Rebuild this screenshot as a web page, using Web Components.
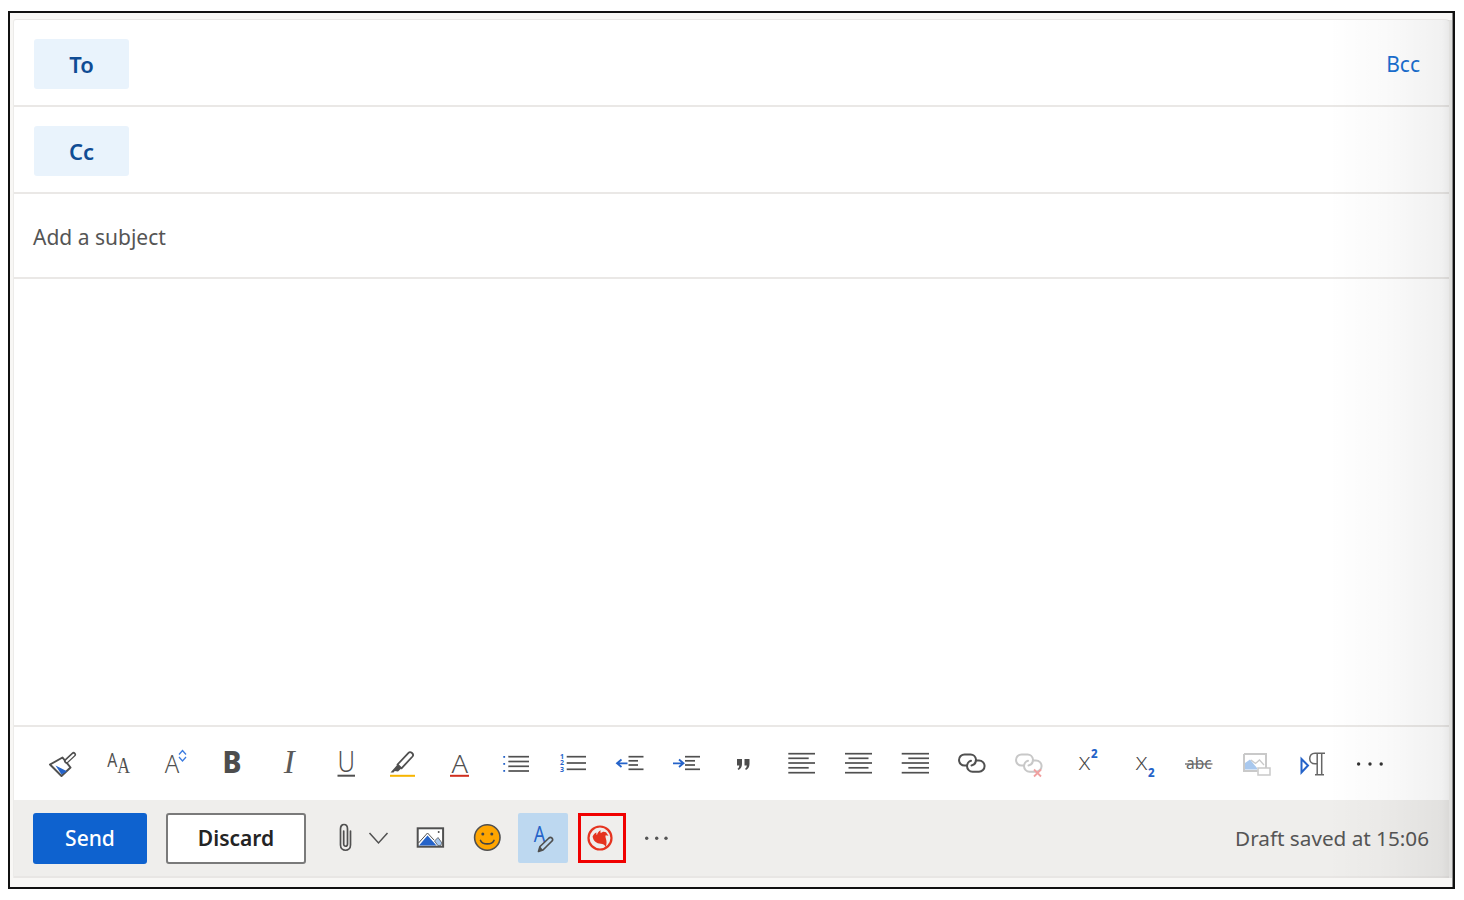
<!DOCTYPE html>
<html lang="en"><head><meta charset="utf-8"><title>Compose</title>
<style>html,body{margin:0;padding:0;background:#fff}body{font-family:"Noto Sans","Open Sans",sans-serif}</style>
</head><body>
<compose-window>
  <recipient-row label="To"><span slot="end">Bcc</span></recipient-row>
  <recipient-row label="Cc"></recipient-row>
  <subject-row>Add a subject</subject-row>
  <editor-body></editor-body>
  <format-toolbar></format-toolbar>
  <action-bar>
    <app-button kind="primary">Send</app-button>
    <app-button kind="secondary" style="margin-left:19px">Discard</app-button>
    <tool-icon name="clip" style="margin-left:23px"></tool-icon>
    <tool-icon name="chev" style="margin-left:1px"></tool-icon>
    <tool-icon name="image" style="margin-left:20px"></tool-icon>
    <tool-icon name="emoji" style="margin-left:25px"></tool-icon>
    <tool-icon name="sign" variant="active" style="margin-left:15px"></tool-icon>
    <tool-icon name="addin" variant="outlined" style="margin-left:10px"></tool-icon>
    <tool-icon name="dots2" style="margin-left:14px"></tool-icon>
    <span slot="status">Draft saved at 15:06</span>
  </action-bar>
</compose-window>
<script>
const G='#505050',B='#2563c9',SANS='\'Noto Sans\',sans-serif',SERIF='\'Liberation Serif\',serif';
const line=(y,a,b,c=G,w=1.7)=>`<path d="M${a} ${y}H${b}" stroke="${c}" stroke-width="${w}"/>`;
const t=(s,x,y,size,o={})=>`<text x="${x}" y="${y}" font-size="${size}" font-family="${o.f||SANS}" font-weight="${o.w||400}" font-style="${o.i?'italic':'normal'}" fill="${o.c||G}" text-anchor="${o.a||'middle'}" ${o.l?`textLength="${o.l}" lengthAdjust="spacingAndGlyphs"`:''}>${s}</text>`;
const chain=c=>`<g fill="none" stroke="${c}" stroke-width="2" stroke-linecap="round"><path d="M11.500 18.600H9.600A5.600 5.600 0 0 1 9.600 7.400H15.600A5.600 5.600 0 0 1 21 12.500C21 15.600 19 18 16.500 18.400"/><path d="M21.500 13.500H24A5.600 5.600 0 0 1 24 24.700H17.700A5.600 5.600 0 0 1 12 19.100C12 16.500 14 14.300 16 13.800"/></g>`;
const ICONS={
 brush:`<path d="M3 17.500 15.500 10.500 23.500 20.500 14.500 29Z" fill="#fff" stroke="${G}" stroke-width="2" stroke-linejoin="round"/><path d="M8.500 18.600 20 24.200 14.500 27.500Z" fill="${B}"/><path d="M19.500 14 26.500 7.500" stroke="${G}" stroke-width="5" stroke-linecap="round"/><path d="M19.800 14 26.500 7.700" stroke="#fff" stroke-width="2" stroke-linecap="round"/>`,
 aa:t('A',9.300,20,20,{l:10})+t('A',20.600,26,23,{f:SERIF,l:12.800}),
 grow:t('A',13,26,26,{w:300,l:14.500})+`<path d="M20 7.500 23.500 3.500 27 7.500M20 10 23.500 14 27 10" fill="none" stroke="#3b7be0" stroke-width="1.300"/>`,
 bold:t('B',16,26,30,{w:800,c:'#4d4d4d',l:19}),
 italic:t('I',16.200,26,33,{f:SERIF,i:1,c:'#5a5a5a'}),
 under:t('U',16.300,25,29,{w:300,l:17.500})+`<rect x="7.500" y="27.700" width="17.500" height="2" fill="${G}"/>`,
 pen:`<path d="M10.500 17.500 21.500 5.800C23.500 3.800 27.500 7.200 25.500 9.500L14.500 21.300Z" fill="#fff" stroke="${G}" stroke-width="1.800" stroke-linejoin="round"/><path d="M3.500 25.500 7.500 21 10.500 17.500 14.500 21.300 11 24.500 7.800 24 6.500 25.500Z" fill="${G}"/><rect x="3" y="27.800" width="25" height="2" fill="#f7b500"/>`,
 acolor:t('A',16.800,26,26,{w:300,l:16.500})+`<rect x="7" y="27.800" width="19" height="2" fill="#d02e1e"/>`,
 bullets:line(9.700,8.300,29)+line(14.500,8.300,29)+line(19.300,8.300,29)+line(24,8.300,29)+`<g fill="${B}"><rect x="3.300" y="9" width="1.800" height="1.800"/><rect x="3.300" y="16" width="1.800" height="1.800"/><rect x="3.300" y="23" width="1.800" height="1.800"/></g>`,
 numbers:line(9.700,9.700,29)+line(16,9.700,29)+line(22.300,9.700,29)+t('1',5,11.500,7,{c:B,w:700})+t('2',5,18,7,{c:B,w:700})+t('3',5,25,7,{c:B,w:700}),
 outdent:line(9.700,14.500,29.500)+line(13.800,14.500,24)+line(18,14.500,24)+line(22.300,14.500,29.500)+`<path d="M13.500 16.300H3.500M7.500 12.500 3 16.300 7.500 20" fill="none" stroke="${B}" stroke-width="1.800"/>`,
 indent:line(9.700,15,30)+line(13.800,15,25)+line(18,15,25)+line(22.300,15,30)+`<path d="M3 16.300H13M9 12.500 13.500 16.300 9 20" fill="none" stroke="${B}" stroke-width="1.800"/>`,
 quote:`<path d="M10 12H15V17C15 20 13.500 22 11.500 23L10.500 21.800C11.700 21 12.200 20 12.300 18.500H10ZM17.500 12H22.500V17C22.500 20 21 22 19 23L18 21.800C19.200 21 19.700 20 19.800 18.500H17.500Z" fill="#4d4d4d"/>`,
 aleft:line(6.700,3.300,30)+line(11.300,3.300,23.700)+line(16,3.300,30)+line(20.800,3.300,23.700)+line(25.700,3.300,30),
 acenter:line(6.700,3,30)+line(11.300,6.500,26.500)+line(16,3,30)+line(20.800,6.500,26.500)+line(25.700,3,30),
 aright:line(6.700,2.700,30)+line(11.300,9.300,30)+line(16,2.700,30)+line(20.800,9.300,30)+line(25.700,2.700,30),
 link:chain(G),
 unlink:chain('#c8c8c8')+`<path d="M22 22.500 29 29.500M29 22.500 22 29.500" stroke="#f0a0a0" stroke-width="1.800"/>`,
 sup:t('X',12.500,23,19,{w:300,l:11.500,c:'#444'})+t('2',22.300,11.300,11.500,{c:B,w:800}),
 sub:t('X',12.500,23,19,{w:300,l:11.500,c:'#444'})+t('2',22.300,29.700,11.500,{c:B,w:800}),
 strike:t('abc',15.800,22,15.500,{c:'#666'})+line(17,2,29.500,'#666',1.300),
 imgalt:`<path d="M4 7H26V22" fill="none" stroke="#c9c9c9" stroke-width="2"/><path d="M4 7V24H17.500" fill="none" stroke="#c9c9c9" stroke-width="2"/><path d="M5 22.500V16L10 12.500 17 21 17 22.500Z" fill="#a8c8ee"/><path d="M11 13 15.500 16.500 19.500 13 24 18" fill="none" stroke="#c9c9c9" stroke-width="1.300"/><rect x="18" y="21" width="12" height="7" fill="#fff" stroke="#c9c9c9" stroke-width="1.500"/>`,
 pilcrow:`<path d="M4.500 12 11 18.500 4.500 25.500Z" fill="none" stroke="${B}" stroke-width="2"/><path d="M28 6.200H18C14.500 6.200 12.700 8.700 12.700 11.500S14.500 16.800 18 16.800H20.200M20.200 6.200V27.800M24.700 6.200V27.800M18 27.800H27" fill="none" stroke="#666" stroke-width="1.500"/>`,
 dots:`<g fill="#333"><circle cx="4.600" cy="17" r="1.700"/><circle cx="16" cy="17" r="1.700"/><circle cx="27.200" cy="17" r="1.700"/></g>`,
 clip:`<path d="M21.500 9V23C21.500 30 11.500 30 11.500 23V7C11.500 1 18.500 1 18.500 7V22C18.500 25 14.700 25 14.700 22V9" fill="none" stroke="${G}" stroke-width="1.700" stroke-linecap="round"/>`,
 chev:`<path d="M7.500 11 16.500 21 25.500 11" fill="none" stroke="${G}" stroke-width="1.500"/>`,
 image:`<rect x="3.700" y="6.300" width="25.400" height="18.400" fill="#fff" stroke="${G}" stroke-width="2"/><path d="M5 23.500 13.500 13.500 22.500 23.500Z" fill="#2563c9"/><path d="M20.500 19 24 15.500 28 21 26.500 23.700 24 23.700Z" fill="#a8c8ee" stroke="${G}" stroke-width=".8"/><circle cx="24.700" cy="10" r="1" fill="${G}"/><path d="M4.500 21 13.500 11 20 18" fill="none" stroke="${G}" stroke-width="1"/>`,
 emoji:`<circle cx="16.300" cy="15.500" r="12.700" fill="#ffa500" stroke="${G}" stroke-width="1.600"/><circle cx="11.800" cy="12" r="1.500" fill="#444"/><circle cx="20.800" cy="12" r="1.500" fill="#444"/><path d="M9.500 18.500C11.500 23 21 23 23 18.500" fill="none" stroke="#444" stroke-width="1.700" stroke-linecap="round"/>`,
 sign:t('A',12.500,19.700,21,{c:'#2563c9',l:11.500})+`<path d="M11.500 29.500 13 24.500 22 16C24 14.200 27 17.300 25 19L16 28Z" fill="none" stroke="${G}" stroke-width="1.700" stroke-linejoin="round"/><path d="M11.500 29.500 13 24.500 16 28Z" fill="${G}"/>`,
 addin:`<g transform="translate(-2 0)"><circle cx="16" cy="16" r="11.500" fill="none" stroke="#e5331f" stroke-width="2.200"/><path d="M8.600 14.500C9.300 12.500 10.800 11 12.500 10.400C12.200 11.500 12.400 12.400 13 13.100C13.400 11 14.700 9 16.700 8.200C16.300 9.500 16.400 10.500 17 11.300C18 9.800 20 9.300 22 10.300L24.500 13.700 21.800 13.300C21.300 14 21.300 15 21.800 16.300C22.700 18.800 22.900 21.800 21.800 25C20.600 22.800 18.800 21.700 16.800 21.700C12.500 21.600 9.200 18.800 8.600 14.500Z" fill="#e5331f"/></g>`,
 dots2:`<g fill="#555"><circle cx="6.700" cy="16.300" r="1.700"/><circle cx="16.700" cy="16.300" r="1.700"/><circle cx="26" cy="16.300" r="1.700"/></g>`
};
class Base extends HTMLElement{
 constructor(){super();this.attachShadow({mode:'open'})}
}
customElements.define('tool-icon',class extends Base{connectedCallback(){
 const v=this.getAttribute('variant')||'';
 const size=v==='active'?'width:50px;height:50px;background:#bdd8f0;border-radius:2px;':v==='outlined'?'width:48px;height:50px;box-sizing:border-box;border:3px solid #f00000;':'width:32px;height:32px;';
 this.shadowRoot.innerHTML=`<style>:host{display:flex;align-items:center;justify-content:center;flex:none;${size}}svg{display:block;overflow:visible}</style><svg width="32" height="32" viewBox="0 0 32 32" aria-hidden="true">${ICONS[this.getAttribute('name')]}</svg>`;
}});
customElements.define('compose-window',class extends Base{connectedCallback(){
 this.shadowRoot.innerHTML=`<style>
 :host{display:block;box-sizing:border-box;width:1447px;height:878px;margin:11px 0 0 8px;border:2px solid #111;background:#f8f7f5;padding:6px 4px 9px 3px;font-family:"Noto Sans","Open Sans",sans-serif;position:relative}
 .card{position:relative;display:flex;flex-direction:column;height:100%;box-sizing:border-box;background:#fff;border-top:1px solid #e8e6e4;border-left:1px solid #ecebe9;border-radius:3px 3px 0 0}
 .fade{position:absolute;top:0;right:-3px;bottom:0;width:125px;pointer-events:none;background:linear-gradient(to right,rgba(0,0,0,0),rgba(0,0,0,.02) 45%,rgba(0,0,0,.055) 92%,rgba(0,0,0,.1))}
 .edge{position:absolute;top:-7px;right:-4px;bottom:-9px;width:1.500px;background:#8a8a8a;pointer-events:none}
 </style><div class="card"><slot></slot><div class="fade"></div><div class="edge"></div></div>`;
}});
customElements.define('recipient-row',class extends Base{connectedCallback(){
 const l=this.getAttribute('label');
 this.shadowRoot.innerHTML=`<style>
 :host{display:flex;align-items:flex-start;box-sizing:border-box;height:87px;padding:19px 29px 0 20px;border-bottom:2px solid #eae8e6}
 .b{width:95px;height:50px;display:flex;align-items:center;justify-content:center;background:#e9f3fc;border-radius:3px;color:#0f4c94;font-size:22px;font-weight:600;line-height:1}
 ::slotted([slot=end]){margin-left:auto;color:#1a6fd0;font-size:21px;line-height:50px}
 </style><div class="b">${l}</div><slot name="end"></slot>`;
}});
customElements.define('subject-row',class extends Base{connectedCallback(){
 this.shadowRoot.innerHTML=`<style>:host{display:flex;align-items:center;box-sizing:border-box;height:85px;padding:3px 0 0 19px;border-bottom:2px solid #eae8e6;color:#555;font-size:21px}</style><slot></slot>`;
}});
customElements.define('editor-body',class extends Base{connectedCallback(){
 this.shadowRoot.innerHTML=`<style>:host{display:block;flex:1;min-height:0}</style>`;
}});
customElements.define('format-toolbar',class extends Base{connectedCallback(){
 const items=[['brush',63],['aa',119],['grow',175],['bold',232],['italic',289],['under',346],['pen',403],['acolor',459],['bullets',516],['numbers',573],['outdent',630],['indent',686],['quote',743],['aleft',801],['acenter',858],['aright',915],['link',971],['unlink',1028],['sup',1088],['sub',1145],['strike',1199],['imgalt',1256],['pilcrow',1313],['dots',1370]];
 this.shadowRoot.innerHTML=`<style>:host{display:flex;align-items:center;box-sizing:border-box;height:75px;padding:0 0 2px 33px;border-top:2px solid #eae8e6;flex:none}</style>`+items.map(([n,c],i)=>`<tool-icon name="${n}" style="margin-left:${i?c-items[i-1][1]-32:0}px"></tool-icon>`).join('');
}});
customElements.define('app-button',class extends Base{connectedCallback(){
 const p=this.getAttribute('kind')==='primary';
 this.shadowRoot.innerHTML=`<style>:host{display:flex;align-items:center;justify-content:center;flex:none;box-sizing:border-box;height:51px;width:${p?114:140}px;border-radius:3px;font-size:21px;font-weight:${p?500:600};${p?'background:#0e62cf;color:#fff':'background:#fff;color:#242424;border:2px solid #7a7a7a'}}</style><slot></slot>`;
}});
customElements.define('action-bar',class extends Base{connectedCallback(){
 this.shadowRoot.innerHTML=`<style>:host{display:flex;align-items:center;box-sizing:border-box;height:78px;padding:0 20px 0 19px;background:#efeeec;border-bottom:2px solid #e8e6e4;flex:none}
 ::slotted([slot=status]){margin-left:auto;color:#555;font-size:20.700px}</style><slot></slot><slot name="status"></slot>`;
}});
</script>
</body></html>
